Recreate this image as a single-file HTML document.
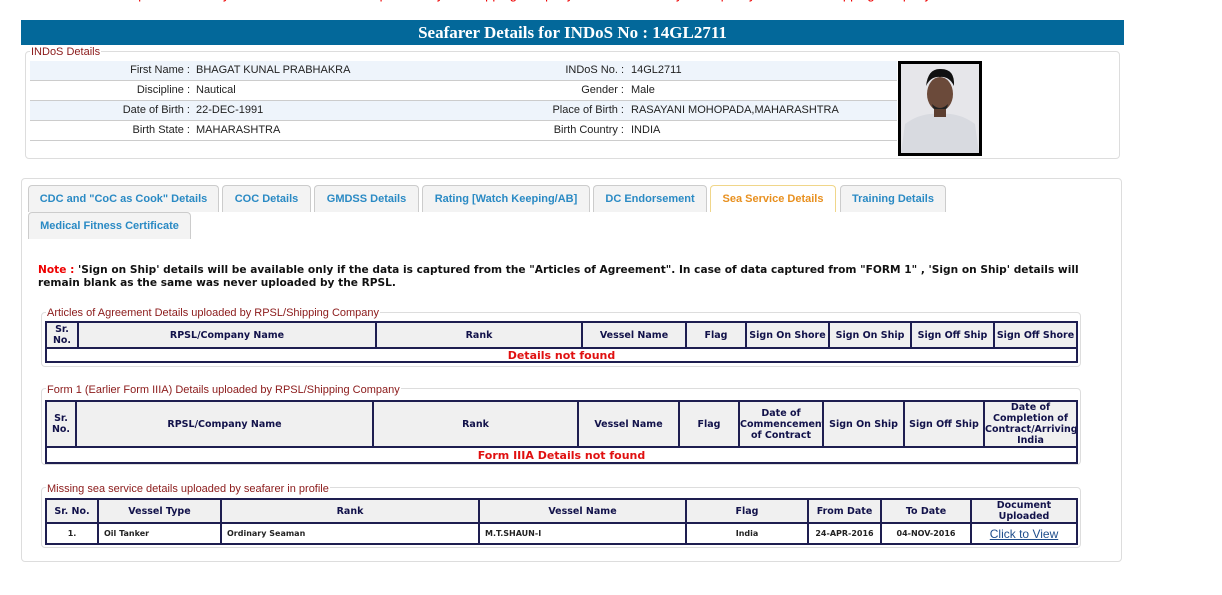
<!DOCTYPE html>
<html><head><meta charset="utf-8"><style>
*{box-sizing:border-box;margin:0;padding:0}
body{width:1222px;height:595px;background:#fff;position:relative;overflow:hidden;font-family:"Liberation Sans",Arial,sans-serif}
.abs{position:absolute}
.topred{left:40px;top:-13px;color:#e00;font-size:13px;white-space:nowrap}
.hdr{left:21px;top:20px;width:1103px;height:25px;background:#03689a;color:#fff;font:bold 17px "Liberation Serif",serif;text-align:center;line-height:25px}
.fs{position:absolute;border:1px solid #ddd;border-radius:4px}
.lg{position:absolute;background:#fff;color:#8b1a1a;font-size:11px;padding:0 1px;line-height:12px}
.row{position:absolute;left:30px;width:867px;height:20px;border-bottom:1px solid #ccc;font-size:11px;line-height:19px;color:#222}
.row.a{background:#eef4fb}
.row span{position:absolute}
.l1{right:707px}.v1{left:166px}.l2{right:273px}.v2{left:601px}
.photo{left:898px;top:61px;width:84px;height:95px;border:3px solid #000;background:linear-gradient(#eee,#ddd)}
.tab{position:absolute;height:27px;border:1px solid #ccc;border-bottom:none;border-radius:4px 4px 0 0;background:#f3f3f3;color:#2a8ac4;font-weight:bold;font-size:11px;line-height:26px;text-align:center}
.tab.on{background:#fff;border-color:#f0d68a;color:#e8901f}
.note{left:38px;top:264px;width:1060px;font:bold 10.6px "DejaVu Sans",Verdana,sans-serif;line-height:13px;color:#111}
table{position:absolute;border-collapse:collapse;table-layout:fixed;font-family:"DejaVu Sans",Verdana,sans-serif;font-weight:bold;color:#12124a}
td{border:2px solid #1e1e50;text-align:center;font-size:9.5px;line-height:11px;overflow:hidden}
tr.h td{background:#f0f0f0}
.nf{color:#e01010;font-size:11px}
.d td{font-size:8px;color:#222}
</style></head><body>
<div class="abs topred">Seafarers are requested to verify their sea service details uploaded by the shipping company and in case of any discrepancy contact the shipping company concerned for correction</div>
<div class="abs hdr">Seafarer Details for INDoS No : 14GL2711</div>

<div class="fs" style="left:25px;top:51px;width:1095px;height:108px"></div>
<div class="lg" style="left:30px;top:46px">INDoS Details</div>
<div class="row a" style="top:61px"><span class="l1">First Name :</span><span class="v1">BHAGAT KUNAL PRABHAKRA</span><span class="l2">INDoS No. :</span><span class="v2">14GL2711</span></div>
<div class="row" style="top:81px"><span class="l1">Discipline :</span><span class="v1">Nautical</span><span class="l2">Gender :</span><span class="v2">Male</span></div>
<div class="row a" style="top:101px"><span class="l1">Date of Birth :</span><span class="v1">22-DEC-1991</span><span class="l2">Place of Birth :</span><span class="v2">RASAYANI MOHOPADA,MAHARASHTRA</span></div>
<div class="row" style="top:121px"><span class="l1">Birth State :</span><span class="v1">MAHARASHTRA</span><span class="l2">Birth Country :</span><span class="v2">INDIA</span></div>
<div class="abs photo"><svg width="78" height="89" viewBox="0 0 78 89"><rect width="78" height="89" fill="#e6e6ea"/><path d="M0 89 L4 60 Q20 48 39 50 Q58 48 74 60 L78 89Z" fill="#d8dae0"/><ellipse cx="39" cy="30" rx="13" ry="17" fill="#6b4a3a"/><path d="M25 22 Q27 4 40 5 Q54 5 53 22 Q48 12 39 13 Q30 12 25 22Z" fill="#111"/><path d="M31 40 Q39 48 47 40 L46 44 Q39 50 32 44Z" fill="#222"/><rect x="33" y="45" width="12" height="8" fill="#5b3e30"/></svg></div>

<div class="fs" style="left:21px;top:178px;width:1101px;height:384px"></div>
<div class="tab" style="left:28px;top:185px;width:191px">CDC and "CoC as Cook" Details</div>
<div class="tab" style="left:222px;top:185px;width:89px">COC Details</div>
<div class="tab" style="left:314px;top:185px;width:105px">GMDSS Details</div>
<div class="tab" style="left:422px;top:185px;width:168px">Rating [Watch Keeping/AB]</div>
<div class="tab" style="left:593px;top:185px;width:114px">DC Endorsement</div>
<div class="tab on" style="left:710px;top:185px;width:126px">Sea Service Details</div>
<div class="tab" style="left:840px;top:185px;width:106px">Training Details</div>
<div class="tab" style="left:28px;top:212px;width:163px">Medical Fitness Certificate</div>

<div class="abs note"><span style="color:#e00">Note :</span> 'Sign on Ship' details will be available only if the data is captured from the "Articles of Agreement". In case of data captured from "FORM 1" , 'Sign on Ship' details will remain blank as the same was never uploaded by the RPSL.</div>

<div class="fs" style="left:41px;top:312px;width:1040px;height:55px"></div>
<div class="lg" style="left:46px;top:307px">Articles of Agreement Details uploaded by RPSL/Shipping Company</div>
<table style="left:45px;top:321px;width:1031px">
<colgroup><col style="width:32px"><col style="width:298px"><col style="width:206px"><col style="width:104px"><col style="width:60px"><col style="width:83px"><col style="width:82px"><col style="width:83px"><col style="width:83px"></colgroup>
<tr class="h" style="height:26px"><td>Sr.<br>No.</td><td>RPSL/Company Name</td><td>Rank</td><td>Vessel Name</td><td>Flag</td><td>Sign On Shore</td><td>Sign On Ship</td><td>Sign Off Ship</td><td>Sign Off Shore</td></tr>
<tr style="height:14px"><td colspan="9" class="nf">Details not found</td></tr>
</table>

<div class="fs" style="left:41px;top:388px;width:1040px;height:77px"></div>
<div class="lg" style="left:46px;top:384px">Form 1 (Earlier Form IIIA) Details uploaded by RPSL/Shipping Company</div>
<table style="left:45px;top:400px;width:1031px">
<colgroup><col style="width:30px"><col style="width:297px"><col style="width:205px"><col style="width:101px"><col style="width:60px"><col style="width:84px"><col style="width:81px"><col style="width:80px"><col style="width:93px"></colgroup>
<tr class="h" style="height:45px"><td>Sr.<br>No.</td><td>RPSL/Company Name</td><td>Rank</td><td>Vessel Name</td><td>Flag</td><td>Date of Commencement of Contract</td><td>Sign On Ship</td><td>Sign Off Ship</td><td>Date of Completion of Contract/Arriving India</td></tr>
<tr style="height:16px"><td colspan="9" class="nf">Form IIIA Details not found</td></tr>
</table>

<div class="fs" style="left:41px;top:487px;width:1040px;height:61px"></div>
<div class="lg" style="left:46px;top:483px">Missing sea service details uploaded by seafarer in profile</div>
<table style="left:45px;top:498px;width:1031px">
<colgroup><col style="width:52px"><col style="width:123px"><col style="width:258px"><col style="width:207px"><col style="width:122px"><col style="width:73px"><col style="width:90px"><col style="width:106px"></colgroup>
<tr class="h" style="height:24px"><td>Sr. No.</td><td>Vessel Type</td><td>Rank</td><td>Vessel Name</td><td>Flag</td><td>From Date</td><td>To Date</td><td>Document Uploaded</td></tr>
<tr class="d" style="height:21px"><td>1.</td><td style="text-align:left;padding-left:5px">Oil Tanker</td><td style="text-align:left;padding-left:5px">Ordinary Seaman</td><td style="text-align:left;padding-left:5px">M.T.SHAUN-I</td><td>India</td><td>24-APR-2016</td><td>04-NOV-2016</td><td style="font:normal 12px 'Liberation Sans',Arial,sans-serif;color:#1f4e8c;text-decoration:underline">Click to View</td></tr>
</table>
</body></html>
